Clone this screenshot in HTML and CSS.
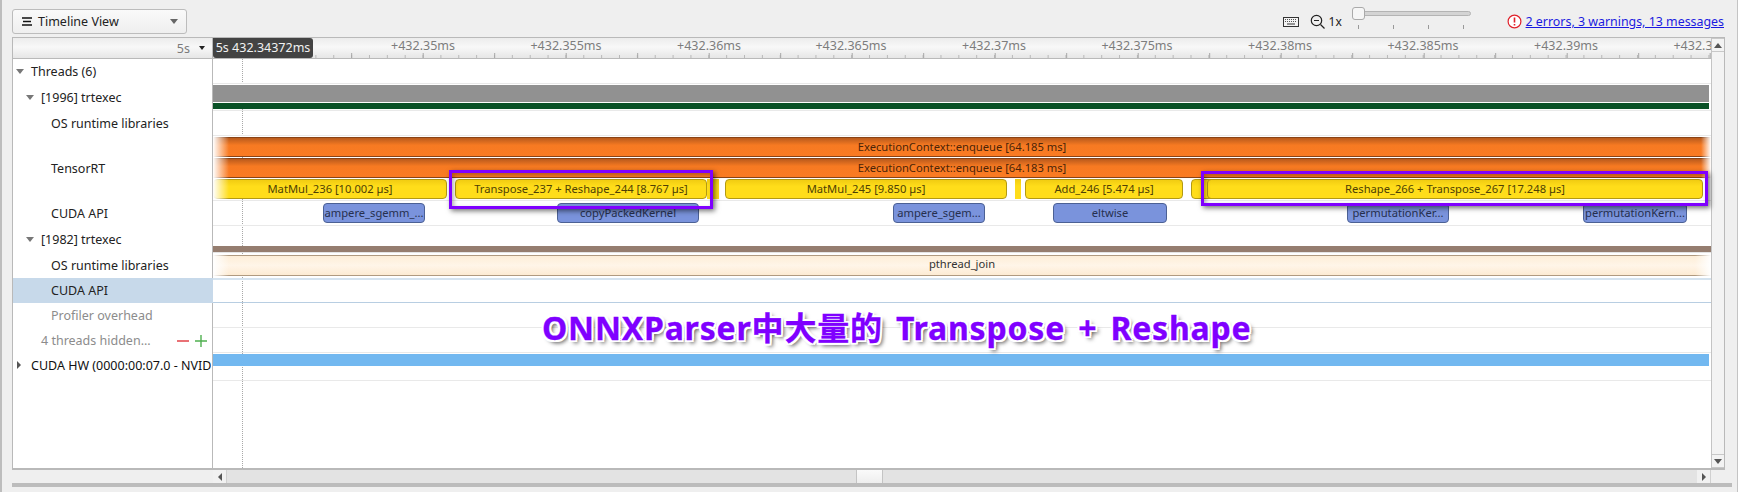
FILE: index.html
```html
<!DOCTYPE html>
<html lang="en">
<head>
    <meta charset="UTF-8">
    <title>Timeline View</title>
    <link rel="stylesheet" href="styles.css">
</head>
<body>
    <header class="toolbar">
        <button class="view-select">
            <svg class="burger" width="10" height="9" viewBox="0 0 10 9"><path d="M0 1h10M1 4.5h8M0 8h10" stroke="#111" stroke-width="1.4" fill="none"/></svg>
            <span class="view-name">Timeline View</span>
            <span class="caret"></span>
        </button>
        <div class="tools">
            <svg width="16" height="10" viewBox="0 0 16 10"><rect x=".5" y=".5" width="15" height="9" fill="#f4f4f4" stroke="#333"/><path d="M2 2.5h12M2 4.5h12" stroke="#555" stroke-dasharray="1 1"/><path d="M4 7h8" stroke="#333"/></svg>
            <svg class="zoom-out" width="15" height="15" viewBox="0 0 15 15"><circle cx="6.5" cy="6.5" r="5.2" fill="none" stroke="#222" stroke-width="1.2"/><path d="M4 6.5h5M10.5 10.5l4 4" stroke="#222" stroke-width="1.2"/></svg>
            <span class="zoom-level">1x</span>
            <div class="slider">
                <div class="slider-track"></div>
                <div class="slider-thumb"></div>
                <div class="slider-ticks"><i></i><i></i><i></i><i></i></div>
            </div>
        </div>
        <div class="status">
            <svg width="15" height="15" viewBox="0 0 15 15"><circle cx="7.5" cy="7.5" r="6.4" fill="#fff" stroke="#e0202a" stroke-width="1.2"/><path d="M7.5 3.5v5M7.5 10v1.6" stroke="#e0202a" stroke-width="1.6"/></svg>
            <a href="#">2 errors, 3 warnings, 13 messages</a>
        </div>
    </header>

    <main class="panel">
        <div class="timeline">
            <div class="ruler">
                <div class="ruler-scale"><span>5s</span><span class="caret dark"></span></div>
                <div class="ruler-track">
                    <span class="tick" style="left:210px">+432.35ms</span>
                    <span class="tick" style="left:353px">+432.355ms</span>
                    <span class="tick" style="left:496px">+432.36ms</span>
                    <span class="tick" style="left:638px">+432.365ms</span>
                    <span class="tick" style="left:781px">+432.37ms</span>
                    <span class="tick" style="left:924px">+432.375ms</span>
                    <span class="tick" style="left:1067px">+432.38ms</span>
                    <span class="tick" style="left:1210px">+432.385ms</span>
                    <span class="tick" style="left:1353px">+432.39ms</span>
                    <span class="tick" style="left:1496px">+432.395ms</span>
                    <div class="cursor-time">5s 432.34372ms</div>
                </div>
            </div>

            <div class="rows">
                <div class="cursor-line"></div>

                <div class="row h25">
                    <div class="label"><span class="arrow down"></span>Threads (6)</div>
                    <div class="track"></div>
                </div>
                <div class="row h27">
                    <div class="label lvl1"><span class="arrow down"></span>[1996] trtexec</div>
                    <div class="track thread-bars">
                        <div class="bar gray"></div>
                        <div class="bar green"></div>
                    </div>
                </div>
                <div class="row h25">
                    <div class="label lvl2">OS runtime libraries</div>
                    <div class="track"></div>
                </div>
                <div class="row h65">
                    <div class="label lvl2">TensorRT</div>
                    <div class="track stack">
                        <div class="orange">ExecutionContext::enqueue [64.185 ms]</div>
                        <div class="orange">ExecutionContext::enqueue [64.183 ms]</div>
                        <div class="lane">
                            <div class="chip yellow" style="left:0;width:234px">MatMul_236 [10.002 µs]</div>
                            <div class="chip yellow" style="left:242px;width:252px">Transpose_237 + Reshape_244 [8.767 µs]</div>
                            <div class="chip yellow flat" style="left:494px;width:12px"></div>
                            <div class="chip yellow" style="left:512px;width:282px">MatMul_245 [9.850 µs]</div>
                            <div class="chip yellow flat" style="left:802px;width:6px"></div>
                            <div class="chip yellow" style="left:812px;width:158px">Add_246 [5.474 µs]</div>
                            <div class="chip yellow" style="left:978px;width:24px"></div>
                            <div class="chip yellow" style="left:994px;width:496px">Reshape_266 + Transpose_267 [17.248 µs]</div>
                        </div>
                    </div>
                </div>
                <div class="row h25">
                    <div class="label lvl2">CUDA API</div>
                    <div class="track api">
                        <div class="chip blue" style="left:110px;width:102px">ampere_sgemm_...</div>
                        <div class="chip blue" style="left:344px;width:142px">copyPackedKernel</div>
                        <div class="chip blue" style="left:680px;width:92px">ampere_sgem...</div>
                        <div class="chip blue" style="left:840px;width:114px">eltwise</div>
                        <div class="chip blue" style="left:1134px;width:102px">permutationKer...</div>
                        <div class="chip blue" style="left:1370px;width:104px">permutationKern...</div>
                    </div>
                </div>
                <div class="row h27">
                    <div class="label lvl1"><span class="arrow down"></span>[1982] trtexec</div>
                    <div class="track brown-wrap"><div class="bar brown"></div></div>
                </div>
                <div class="row h25">
                    <div class="label lvl2">OS runtime libraries</div>
                    <div class="track cream-wrap"><div class="cream">pthread_join</div></div>
                </div>
                <div class="row h25 selected">
                    <div class="label lvl2">CUDA API</div>
                    <div class="track"></div>
                </div>
                <div class="row h25">
                    <div class="label lvl2 muted">Profiler overhead</div>
                    <div class="track"></div>
                </div>
                <div class="row h25">
                    <div class="label hidden-threads muted">
                        <span>4 threads hidden...</span>
                        <span class="pm"><svg width="12" height="12" viewBox="0 0 12 12"><path d="M0 6h12" stroke="#e0343a" stroke-width="1.4"/></svg><svg width="12" height="12" viewBox="0 0 12 12"><path d="M0 6h12M6 0v12" stroke="#4fb04f" stroke-width="1.4"/></svg></span>
                    </div>
                    <div class="track"></div>
                </div>
                <div class="row h28">
                    <div class="label hw"><span class="arrow right"></span><span class="clip">CUDA HW (0000:00:07.0 - NVID</span></div>
                    <div class="track hw-wrap"><div class="bar sky"></div></div>
                </div>
                <div class="row filler">
                    <div class="label"></div>
                    <div class="track none"></div>
                </div>

                <div class="mark mark-a"></div>
                <div class="mark mark-b"></div>
                <div class="callout">ONNXParser中大量的 Transpose + Reshape</div>
            </div>
        </div>

        <aside class="vscroll">
            <div class="sb-btn"><span class="tri up"></span></div>
            <div class="sb-fill"></div>
            <div class="sb-btn"><span class="tri dn"></span></div>
        </aside>
    </main>

    <div class="hscroll">
        <div class="sb-btn-h"><span class="tri lf"></span></div>
        <div class="hfill"><div class="hthumb"></div></div>
        <div class="sb-btn-h"><span class="tri rt"></span></div>
    </div>
    <div class="bottom-bar"></div>
</body>
</html>
```

FILE: styles.css
```css
* {
    box-sizing: border-box;
}

html, body {
    height: 492px;
}

body {
    margin: 0;
    padding: 0 12px 0 12px;
    overflow: hidden;
    background: #efefef;
    font-family: "Noto Sans", "Noto Sans CJK SC", sans-serif;
    font-size: 12px;
    color: #222;
    position: relative;
    border-left: 2px solid #bdbdbd;
    border-right: 1px solid #c4c4c4;
    padding-left: 10px;
}

.toolbar {
    height: 37px;
    display: flex;
    align-items: flex-start;
    position: relative;
}

.view-select {
    margin-top: 9px;
    width: 175px;
    height: 25px;
    padding: 0 8px 0 9px;
    display: flex;
    align-items: center;
    gap: 6px;
    background: linear-gradient(to bottom, #fafafa, #eee);
    border: 1px solid #bcbcbc;
    border-radius: 3px;
    font: inherit;
    font-size: 12.5px;
    color: #222;
}

.view-name {
    flex: 1;
    text-align: left;
}

.caret {
    width: 0;
    height: 0;
    border-left: 4px solid transparent;
    border-right: 4px solid transparent;
    border-top: 5px solid #666;
}

.caret.dark {
    border-top-color: #222;
    border-left-width: 3px;
    border-right-width: 3px;
    border-top-width: 4px;
}

.tools {
    margin-left: auto;
    display: flex;
    align-items: center;
    height: 15px;
    margin-top: 14px;
}

.zoom-out {
    margin-left: 11px;
}

.zoom-level {
    margin-left: 4px;
    width: 24px;
    font-size: 12px;
}

.slider {
    position: relative;
    width: 118px;
    height: 24px;
    margin-top: 0;
}

.slider-track {
    position: absolute;
    left: 0;
    right: 0;
    top: 1px;
    height: 5px;
    background: #d4d4d4;
    border: 1px solid #b4b4b4;
    border-radius: 3px;
}

.slider-thumb {
    position: absolute;
    left: -1px;
    top: -3px;
    width: 13px;
    height: 13px;
    background: #f6f6f6;
    border: 1px solid #aaa;
    border-radius: 3px;
}

.slider-ticks {
    position: absolute;
    left: 5px;
    top: 15px;
    width: 106px;
    display: flex;
    justify-content: space-between;
}

.slider-ticks i {
    width: 1px;
    height: 4px;
    background: #999;
}

.status {
    margin-left: 36px;
    margin-top: 14px;
    margin-right: 1px;
    display: flex;
    align-items: center;
    gap: 4px;
    font-size: 12.4px;
    height: 15px;
}

.status a {
    color: #1a1ae0;
}

.panel {
    height: 433px;
    display: flex;
    margin-right: 0;
    width: 1713px;
    border: 1px solid #b9b9b9;
    border-width: 1px 1px 2px 1px;
    background: #fff;
    position: relative;
}

.timeline {
    width: 1698px;
    display: flex;
    flex-direction: column;
}

.ruler {
    height: 21px;
    display: flex;
    background: linear-gradient(to bottom, #ececec, #f8f8f8 45%, #e6e6e6);
    border-bottom: 1px solid #b9b9b9;
}

.ruler-scale {
    width: 200px;
    border-right: 1px solid #b9b9b9;
    display: flex;
    align-items: center;
    justify-content: flex-end;
    gap: 9px;
    padding-right: 7px;
    color: #7a7a7a;
    font-size: 12.5px;
}

.ruler-track {
    flex: 1;
    position: relative;
    overflow: hidden;
    background-image:
        linear-gradient(to right, #a6a6a6 1px, transparent 1px),
        linear-gradient(to right, #b8b8b8 1px, transparent 1px);
    background-size: 71.5px 5px, 17.87px 3px;
    background-position: 66.7px 100%, 13.1px 100%;
    background-repeat: repeat-x;
}

.tick {
    position: absolute;
    top: -1px;
    transform: translateX(-50%);
    color: #7d7d7d;
    font-size: 12.5px;
    white-space: nowrap;
}

.cursor-time {
    position: absolute;
    left: 0;
    top: 0;
    width: 100px;
    height: 20px;
    background: #434343;
    color: #f2f2f2;
    border-radius: 0 3px 3px 3px;
    text-align: center;
    line-height: 19px;
    font-size: 12.5px;
    white-space: nowrap;
}

.rows {
    flex: 1;
    display: flex;
    flex-direction: column;
    position: relative;
}

.cursor-line {
    position: absolute;
    left: 229px;
    top: 0;
    bottom: 0;
    border-left: 1px dotted #a8a8a8;
}

.row {
    display: flex;
}

.h25 { height: 25px; }
.h27 { height: 27px; }
.h28 { height: 28px; }
.h65 { height: 65px; }

.filler {
    flex: 1;
}

.label {
    width: 200px;
    flex: none;
    border-right: 1px solid #b9b9b9;
    display: flex;
    align-items: center;
    padding-left: 18px;
    background: #fff;
    color: #222;
    font-size: 12.5px;
    white-space: nowrap;
}

.lvl1 {
    padding-left: 28px;
}

.lvl2 {
    padding-left: 38px;
}

.muted {
    color: #8c8c8c;
}

.hidden-threads {
    padding-left: 28px;
    padding-right: 5px;
    justify-content: space-between;
}

.pm {
    display: flex;
    gap: 6px;
}

.hw {
    padding-left: 18px;
    align-items: flex-start;
    padding-top: 4px;
}

.clip {
    overflow: hidden;
    color: #111;
}

.arrow {
    position: absolute;
    width: 0;
    height: 0;
}

.arrow.down {
    margin-left: -15px;
    border-left: 4px solid transparent;
    border-right: 4px solid transparent;
    border-top: 5px solid #777;
}

.arrow.right {
    left: 4px;
    margin-top: 4px;
    border-top: 4px solid transparent;
    border-bottom: 4px solid transparent;
    border-left: 4px solid #555;
}

.selected .label {
    background: #c7d9ea;
    border-right-color: #c7d9ea;
}

.selected .track {
    border-top: 2px solid #d5e3ef;
    border-bottom: 1px solid #b8cee2;
}

.track {
    flex: 1;
    position: relative;
    border-bottom: 1px solid #e9e9e9;
}

.track.none {
    border-bottom: 0;
}

.bar {
    position: relative;
}

.thread-bars {
    padding-top: 1px;
    display: flex;
    flex-direction: column;
    gap: 1px;
    padding-right: 2px;
}

.gray {
    height: 17px;
    background: #919191;
}

.green {
    height: 6px;
    background: #0a5227;
}

.brown-wrap {
    display: flex;
    flex-direction: column;
    justify-content: flex-end;
    padding-bottom: 0;
    border-bottom-color: #e4e4e4;
}

.brown {
    height: 6px;
    background: #957d6f;
}

.stack {
    padding-top: 1px;
    display: flex;
    flex-direction: column;
    gap: 1px;
    overflow: hidden;
}

.stack::before {
    content: "";
    position: absolute;
    z-index: 2;
    left: 0;
    top: 0;
    bottom: 0;
    width: 16px;
    background: linear-gradient(to right, #fff, rgba(255, 255, 255, 0));
}

.stack::after {
    content: "";
    position: absolute;
    z-index: 2;
    right: 0;
    top: 0;
    bottom: 22px;
    width: 10px;
    background: linear-gradient(to left, #fff, rgba(255, 255, 255, 0));
}

.orange {
    position: relative;
    height: 20px;
    line-height: 18px;
    text-align: center;
    font-size: 11.2px;
    color: #4a2408;
    background: linear-gradient(to bottom, #b95a1c, #f77a22 40%, #fa7b23);
    border-top: 1px solid #8a4316;
    border-bottom: 1px solid #8a4316;
}

.lane {
    position: relative;
    height: 20px;
}

.chip {
    position: absolute;
    text-align: center;
    font-size: 11.2px;
    white-space: nowrap;
    overflow: hidden;
    border-radius: 4px;
}

.yellow {
    top: 0;
    height: 20px;
    line-height: 18px;
    color: #4e3f04;
    background: linear-gradient(to bottom, #f1cc12, #ffdd1a 35%);
    border: 1px solid #b39a12;
}

.yellow.flat {
    border: 0;
    border-radius: 0;
}

.blue {
    top: 2px;
    height: 20px;
    line-height: 17px;
    color: #26304f;
    background: #7a93dc;
    border: 1px solid #4c6195;
}

.cream-wrap {
    padding-top: 2px;
    border-bottom: 0;
}

.cream {
    position: relative;
    height: 21px;
    line-height: 16px;
    text-align: center;
    font-size: 11.2px;
    color: #333;
    background: linear-gradient(to bottom, #fdeed8, #fff5e8 50%, #fdebd3);
    border-top: 1px solid #b09a80;
    border-bottom: 1px solid #b09a80;
}

.cream::before,
.cream::after {
    content: "";
    position: absolute;
    top: -1px;
    bottom: -1px;
    width: 16px;
}

.cream::before {
    left: 0;
    background: linear-gradient(to right, #fff, rgba(255, 255, 255, 0));
}

.cream::after {
    right: 0;
    background: linear-gradient(to left, #fff, rgba(255, 255, 255, 0));
}

.hw-wrap {
    padding-top: 1px;
    padding-right: 2px;
}

.sky {
    height: 12px;
    background: #72b8f0;
}

.mark {
    position: absolute;
    z-index: 5;
    border: 3px solid #7f00ff;
    box-shadow: 2px 2px 5px rgba(0, 0, 0, .55), inset 2px 2px 4px rgba(0, 0, 0, .3);
}

.mark-a {
    left: 436px;
    top: 111px;
    width: 264px;
    height: 39px;
}

.mark-b {
    left: 1188px;
    top: 112px;
    width: 507px;
    height: 35px;
}

.callout {
    position: absolute;
    z-index: 6;
    left: 529px;
    top: 247px;
    color: #7f00ff;
    -webkit-text-stroke: .3px #7f00ff;
    font-weight: 700;
    font-size: 32px;
    line-height: 44px;
    letter-spacing: .8px;
    word-spacing: 4px;
    white-space: nowrap;
    text-shadow: 1px 0 #fff, -1px 0 #fff, 0 1px #fff, 0 -1px #fff,
        2px 2px #fff, -2px -2px #fff, 2px -2px #fff, -2px 2px #fff,
        2px 0 #fff, -2px 0 #fff, 0 2px #fff, 0 -2px #fff,
        3px 3px 4px rgba(0, 0, 0, .7);
}

.vscroll {
    flex: 1;
    display: flex;
    flex-direction: column;
    border-left: 1px solid #c4c4c4;
    background: #f3f3f3;
}

.sb-btn {
    height: 14px;
    display: flex;
    align-items: center;
    justify-content: center;
    border-top: 1px solid #c8c8c8;
    border-bottom: 1px solid #c8c8c8;
}

.sb-fill {
    flex: 1;
}

.tri {
    width: 0;
    height: 0;
}

.tri.up {
    border-left: 4px solid transparent;
    border-right: 4px solid transparent;
    border-bottom: 5px solid #555;
}

.tri.dn {
    border-left: 4px solid transparent;
    border-right: 4px solid transparent;
    border-top: 5px solid #555;
}

.tri.lf {
    border-top: 4px solid transparent;
    border-bottom: 4px solid transparent;
    border-right: 4px solid #555;
}

.tri.rt {
    border-top: 4px solid transparent;
    border-bottom: 4px solid transparent;
    border-left: 4px solid #555;
}

.hscroll {
    height: 13px;
    margin-left: 201px;
    width: 1498px;
    display: flex;
    background: #e3e3e3;
}

.sb-btn-h {
    width: 14px;
    display: flex;
    align-items: center;
    justify-content: center;
    background: #f1f1f1;
    border-right: 1px solid #d0d0d0;
}

.hfill {
    flex: 1;
    position: relative;
}

.hthumb {
    position: absolute;
    left: 629px;
    top: 0;
    width: 27px;
    height: 13px;
    background: linear-gradient(to bottom, #fafafa, #eee);
    border: 1px solid #c4c4c4;
    border-width: 0 1px;
}

.bottom-bar {
    height: 4px;
    width: 1720px;
    background: #bcbcbc;
}
```
